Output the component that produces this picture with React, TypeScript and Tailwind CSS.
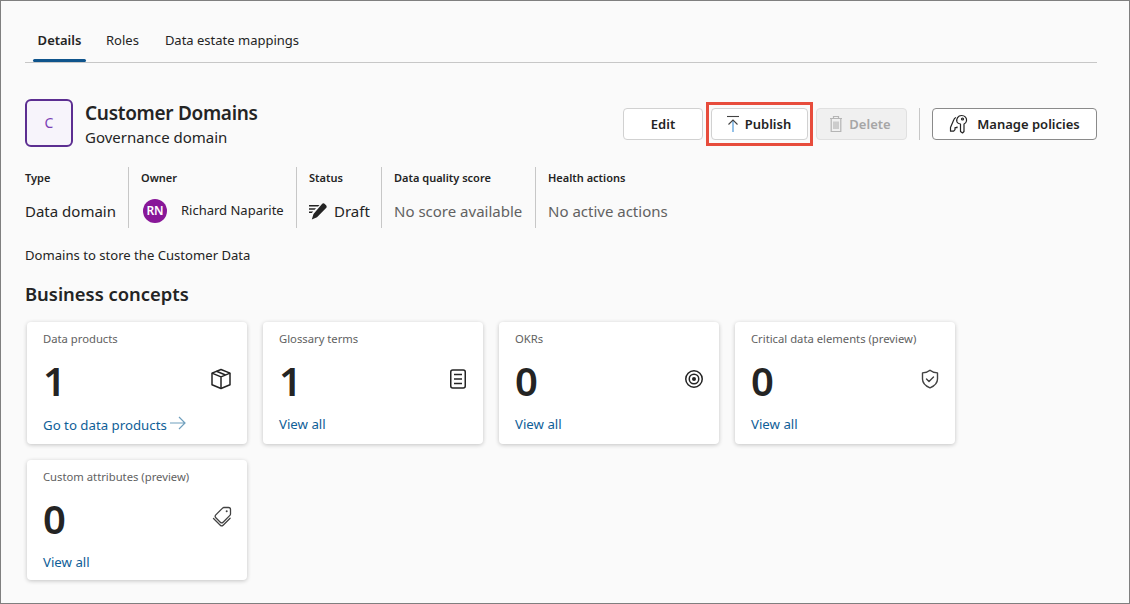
import { ReactNode } from 'react';

const FONT = "font-['Noto_Sans','Open_Sans',sans-serif]";

function BoxIcon() {
    return (
        <svg width="22" height="22" viewBox="0 0 22 22" fill="none" stroke="#242424" strokeWidth="1.5" strokeLinejoin="round">
            <path d="M11 1.5l9 3.6v11.6l-9 3.8-9-3.8V5.1z" />
            <path d="M2 5.1l9 3.8 9-3.8M11 8.9v11.6M6.5 3.3l9 3.7" />
        </svg>
    );
}

function DocIcon() {
    return (
        <svg width="18" height="20" viewBox="0 0 18 20" fill="none" stroke="#242424" strokeWidth="1.5">
            <rect x="1.75" y="1" width="14.5" height="18" rx="2" />
            <path d="M5 5.5h8M5 10h8M5 14.5h8" />
        </svg>
    );
}

function TargetIcon() {
    return (
        <svg width="20" height="20" viewBox="0 0 20 20" fill="none" stroke="#242424" strokeWidth="1.5">
            <circle cx="10" cy="10" r="8.25" />
            <circle cx="10" cy="10" r="4.75" />
            <circle cx="10" cy="10" r="2" fill="#242424" stroke="none" />
        </svg>
    );
}

function ShieldIcon() {
    return (
        <svg width="20" height="20" viewBox="0 0 20 20" fill="none" stroke="#424242" strokeWidth="1.4" strokeLinejoin="round" strokeLinecap="round">
            <path d="M10 1.2c2 1.7 4.5 2.6 7.5 2.7v6c0 4-2.6 6.8-7.5 8.9-4.9-2.1-7.5-4.9-7.5-8.9v-6c3-.1 5.5-1 7.5-2.7z" />
            <path d="M6.5 10l2.5 2.5 4.5-4.500" />
        </svg>
    );
}

function TagIcon() {
    return (
        <svg width="20" height="22" viewBox="0 0 20 22" fill="none" stroke="#424242" strokeWidth="1.3" strokeLinejoin="round" strokeLinecap="round">
            <path d="M12 1.5h4.5a2 2 0 0 1 2 2V8a2 2 0 0 1-.6 1.4l-6.8 6.8a2 2 0 0 1-2.8 0l-4.5-4.5a2 2 0 0 1 0-2.8l6.800-6.800A2 2 0 0 1 12 1.500z" />
            <path d="M1.500 12.500l6.800 6.700c.8.8 2 .8 2.800 0l7-7" />
            <circle cx="14.700" cy="5.300" r="1" fill="#424242" stroke="none" />
        </svg>
    );
}

function ArrowIcon() {
    return (
        <svg width="16" height="14" viewBox="0 0 16 14" fill="none" stroke="#6f9fbd" strokeWidth="1.2" className="ml-[3px] -translate-y-[3px]">
            <path d="M0 7h14.500M9 1l6 6-6 6" />
        </svg>
    );
}

function PublishIcon() {
    return (
        <svg width="14" height="18" viewBox="0 0 14 18" fill="none" strokeWidth="1.1">
            <path d="M1 1.5h12" stroke="#424242" />
            <path d="M7 5.5V17" stroke="#3b8fd6" />
            <path d="M2.5 9.5L7 5l4.500 4.500" stroke="#424242" />
        </svg>
    );
}

function TrashIcon() {
    return (
        <svg width="14" height="18" viewBox="0 0 14 18" fill="none" stroke="#b5b5b5" strokeWidth="1.2">
            <path d="M1 3.5h12M4.500 3.500V1.500h5v2M2.200 3.500v13h9.600v-13M5 6.500v7.500M7 6.500v7.500M9 6.500v7.500" />
        </svg>
    );
}

function KeysIcon() {
    return (
        <svg width="20" height="20" viewBox="0 0 20 20" fill="none" stroke="#242424" strokeWidth="1.2" strokeLinejoin="round">
            <path d="M7 3.500c-1 .3-1.800 1-2.200 2.200L1.500 13.500v3.700h3.200l1.300-1.500v-2h2v-1.200" />
            <path d="M8 8c-1-3 1-6.500 4.500-6.500S18 4 17.500 7c-.3 1.500-1.200 2.500-2.500 3v7.500l-1.500 1.500-2-1.500V10C9.500 9.800 8.500 9 8 8z" />
            <circle cx="13.500" cy="5" r="1" />
        </svg>
    );
}

function PencilIcon() {
    return (
        <svg width="18" height="17" viewBox="0 0 18 17" fill="#242424">
            <path d="M13 .9c.8-.8 2-.8 2.800 0l1.300 1.300c.8.8.8 2 0 2.800L8 14.300 2.800 16.500l1.700-5.500z" />
            <path d="M0 2h10.500L9 3.500H0zM0 5.200h7L5.600 6.700H0zM0 8.400h4.200L2.800 9.900H0z" />
        </svg>
    );
}

function Button({ children, className }: { children: ReactNode; className: string }) {
    return (
        <div className={`h-8 flex items-center justify-center rounded-[4px] bg-white text-[13px] font-semibold border ${className}`}>
            {children}
        </div>
    );
}

function MetaCell({ label, children, className }: { label: string; children: ReactNode; className: string }) {
    return (
        <div className={`h-[61px] flex flex-col ${className}`}>
            <div className="text-[11px] font-semibold text-[#242424] leading-4 mt-[3px]">{label}</div>
            <div className="mt-[14px] h-[22px] flex items-center text-[15px]">{children}</div>
        </div>
    );
}

function ConceptCard({ title, count, link, icon, arrow, iconClass }: { title: string; count: number; link: string; icon: ReactNode; arrow?: boolean; iconClass: string }) {
    return (
        <div className="w-[220px] bg-white rounded-[4px] shadow-[0_1px_4px_rgba(0,0,0,0.22)] px-4 flex flex-col">
            <div className="text-[11.25px] text-[#616161] mt-[9px] leading-4">{title}</div>
            <div className="flex items-center justify-between mt-[14px] h-[40px]">
                <span className="text-[40px] font-semibold leading-10 text-[#242424]">{count}</span>
                <span className={`flex -translate-y-[2px] ${iconClass}`}>{icon}</span>
            </div>
            <div className={`mt-[14px] mb-[7px] flex items-center text-[13.25px] text-[#0f6098] ${arrow ? 'h-[22px]' : 'h-5'}`}>
                {link}
                {arrow && <ArrowIcon />}
            </div>
        </div>
    );
}

export default function App() {
    return (
        <div className={`${FONT} w-[1130px] h-[604px] overflow-hidden bg-[#fafafa] border border-[#7f7f7f] text-[#242424] pl-6 pr-8`}>
            {/* tabs */}
            <div className="h-[62px] border-b border-[#c7c7c7] flex items-start pl-2 text-[13px]">
                <div className="relative mt-[29px] h-[32px] w-[53px] text-center font-semibold leading-5">
                    Details
                    <div className="absolute left-0 right-0 bottom-0 h-[3px] rounded-sm bg-[#0f548c]" />
                </div>
                <div className="mt-[29px] ml-[20px] leading-5">Roles</div>
                <div className="mt-[29px] ml-[26px] leading-5">Data estate mappings</div>
            </div>

            {/* header */}
            <div className="mt-[36px] flex items-start h-[48px]">
                <div className="w-[48px] h-[48px] rounded-[6px] border-2 border-[#5c2e91] bg-[#f7f4fb] flex items-center justify-center text-[#7b3fb5] text-sm">C</div>
                <div className="ml-3 pt-px">
                    <div className="text-[19px] tracking-[-0.3px] font-semibold leading-[26px]">Customer Domains</div>
                    <div className="text-[15px] leading-[22px]">Governance domain</div>
                </div>
                <div className="ml-auto mt-[9px] flex items-center">
                    <Button className="w-[80px] border-[#d1d1d1] pt-[2px]">Edit</Button>
                    <div className="relative ml-2">
                        <Button className="w-[97px] border-[#d1d1d1] gap-[5px] pr-[2px]">
                            <PublishIcon />
                            <span className="pt-[2px]">Publish</span>
                        </Button>
                        <div className="absolute -left-[5px] -right-[5px] -top-[6px] -bottom-[6px] border-[3px] border-[#e74c3c]" />
                    </div>
                    <Button className="ml-2 w-[91px] !bg-[#f0f0f0] border-[#e0e0e0] text-[#a6a6a6] gap-[6px] pr-[3px]">
                        <TrashIcon />
                        <span className="pt-[2px]">Delete</span>
                    </Button>
                    <div className="w-px h-8 bg-[#c7c7c7] mx-3" />
                    <Button className="w-[165px] border-[#8a8a8a] gap-[8px]">
                        <KeysIcon />
                        <span className="pt-[2px]">Manage policies</span>
                    </Button>
                </div>
            </div>

            {/* meta */}
            <div className="mt-[20px] flex">
                <MetaCell label="Type" className="w-[103px]">Data domain</MetaCell>
                <MetaCell label="Owner" className="w-[168px] border-l border-[#c7c7c7] pl-3">
                    <span className="w-6 h-6 rounded-full bg-[#881798] text-white text-xs font-semibold flex items-center justify-center ml-[2px]">RN</span>
                    <span className="ml-[14px] text-[13px]">Richard Naparite</span>
                </MetaCell>
                <MetaCell label="Status" className="w-[85px] border-l border-[#c7c7c7] pl-3">
                    <PencilIcon />
                    <span className="ml-[7px]">Draft</span>
                </MetaCell>
                <MetaCell label="Data quality score" className="w-[154px] border-l border-[#c7c7c7] pl-3">
                    <span className="text-[#616161]">No score available</span>
                </MetaCell>
                <MetaCell label="Health actions" className="border-l border-[#c7c7c7] pl-3">
                    <span className="text-[#616161]">No active actions</span>
                </MetaCell>
            </div>

            <div className="mt-[17px] text-[13.1px] leading-5">Domains to store the Customer Data</div>
            <div className="mt-[17px] text-[18.4px] font-semibold leading-6">Business concepts</div>

            {/* cards */}
            <div className="mt-[16px] ml-[2px] grid grid-cols-[repeat(4,220px)] gap-4">
                <ConceptCard title="Data products" count={1} link="Go to data products" icon={<BoxIcon />} arrow iconClass="-mr-[1px]" />
                <ConceptCard title="Glossary terms" count={1} link="View all" icon={<DocIcon />} iconClass="mr-0" />
                <ConceptCard title="OKRs" count={0} link="View all" icon={<TargetIcon />} iconClass="-mr-[1px]" />
                <ConceptCard title="Critical data elements (preview)" count={0} link="View all" icon={<ShieldIcon />} iconClass="-mr-[1px]" />
                <ConceptCard title="Custom attributes (preview)" count={0} link="View all" icon={<TagIcon />} iconClass="-mr-[1px]" />
            </div>
        </div>
    );
}
